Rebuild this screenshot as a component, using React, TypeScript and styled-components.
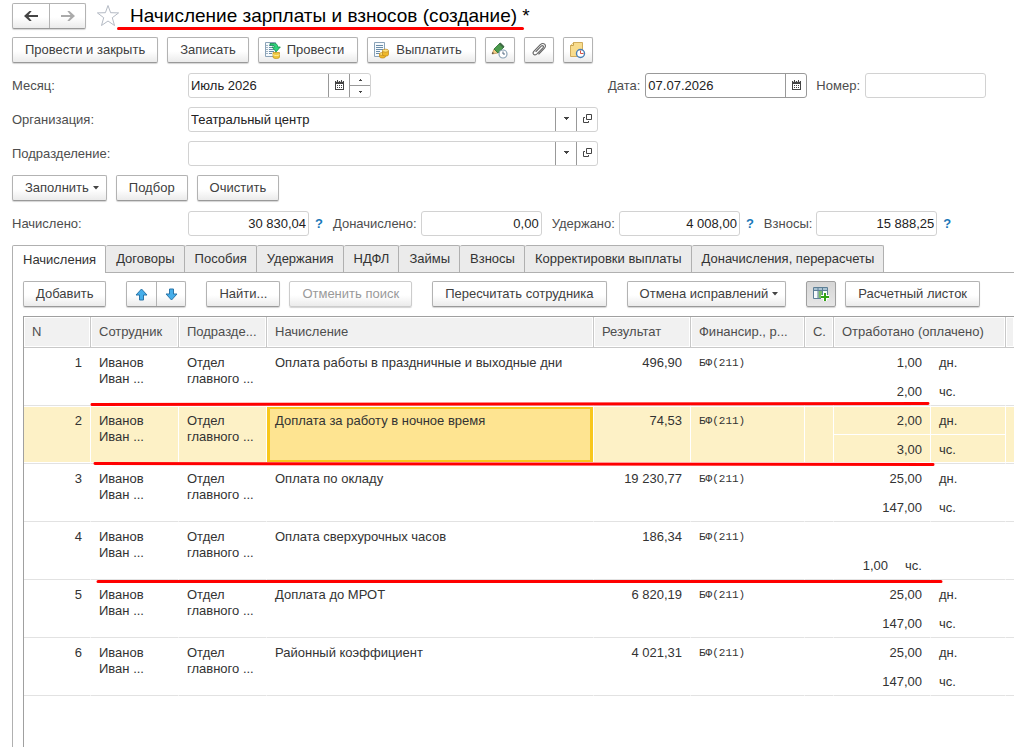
import React from "react";
import styled, { createGlobalStyle, css } from "styled-components";

const GlobalStyle = createGlobalStyle`
  *, *::before, *::after { box-sizing: border-box; }
  body {
    margin: 0;
    background: #fff;
    color: #333;
    font: 13px/16px "Liberation Sans", Arial, sans-serif;
  }
  button, input { font: inherit; color: inherit; margin: 0; }
  svg { display: block; flex: none; }
`;

/* ---------- page ---------- */

const Page = styled.main`
  display: flex;
  flex-direction: column;
  gap: 9px;
  min-height: 100vh;
  padding: 3px 0 0 12px;
  overflow: hidden;
`;

const Header = styled.header`
  display: flex;
  align-items: center;
  height: 25px;
`;

const FavoriteButton = styled.button`
  margin: 0 0 0 10px;
  padding: 0;
  border: 0;
  background: none;
`;

const Title = styled.h1`
  position: relative;
  margin: 0 0 0 10px;
  color: #000;
  font-size: 19px;
  font-weight: 400;
  line-height: 24px;
  white-space: nowrap;
`;

const TitleMark = styled.svg`
  position: absolute;
  left: -13px;
  top: 22px;
`;

/* ---------- buttons ---------- */

const buttonFace = css`
  border: 1px solid #b3b3b3;
  border-bottom-color: #999;
  background: linear-gradient(#fff 55%, #ebebeb);
  box-shadow: 0 1px 1px #d4d4d4;
`;

const Button = styled.button<{ $pressed?: boolean; $icon?: boolean }>`
  ${buttonFace}
  display: flex;
  align-items: center;
  justify-content: center;
  gap: 6px;
  height: 26px;
  padding: 0 12px;
  border-radius: 2px;
  color: #404040;
  white-space: nowrap;
  ${(p) => p.$icon && css`width: 30px; padding: 0;`}
  ${(p) => p.$pressed && css`
    border-color: #a0a0a0;
    background: linear-gradient(#d6d6d6, #e6e6e6);
  `}
  &:disabled { color: #999; border-color: #ccc; }
`;

const IconTextButton = styled(Button)`
  padding: 0 13px 0 5px;
`;

const MenuButton = styled(Button)`
  gap: 4px;
  padding-right: 6px;
`;

const ButtonPair = styled.div<{ $cell: number }>`
  ${buttonFace}
  display: flex;
  height: 26px;
  border-radius: 2px;
  button {
    display: flex;
    align-items: center;
    justify-content: center;
    width: ${(p) => p.$cell}px;
    padding: 0;
    border: 0;
    background: none;
  }
  button + button { border-left: 1px solid #b3b3b3; }
`;

const Toolbar = styled.div`
  display: flex;
  gap: 9px;
  height: 27px;
`;

const ListToolbar = styled(Toolbar)`
  gap: 20px;
`;

const ToolGroup = styled.div`
  display: flex;
  gap: 9px;
`;

/* ---------- form ---------- */

const FormRow = styled.div`
  display: grid;
  grid-template-columns: 176px 1fr 388px;
  align-items: center;
  padding-right: 28px;
`;

const Label = styled.label`
  color: #4d4d4d;
  white-space: nowrap;
`;

const Field = styled.div<{ $width?: number; $active?: boolean }>`
  display: flex;
  width: ${(p) => (p.$width ? p.$width + "px" : "100%")};
  height: 25px;
  border: 1px solid ${(p) => (p.$active ? "#999" : "#d2d2d2")};
  border-radius: 3px;
  background: #fff;
`;

const Input = styled.input`
  flex: 1;
  min-width: 0;
  padding: 0 2px;
  border: 0;
  outline: 0;
  background: none;
  color: #222;
`;

const NumberInput = styled(Input)`
  text-align: right;
`;

const FieldButton = styled.button`
  display: flex;
  align-items: center;
  justify-content: center;
  width: 21px;
  padding: 0 0 2px;
  border: 0;
  border-left: 1px solid #999;
  background: none;
`;

const Spinner = styled.div`
  display: flex;
  flex-direction: column;
  width: 21px;
  border-left: 1px solid #999;
  button {
    display: flex;
    flex: 1;
    align-items: center;
    justify-content: center;
    padding: 0;
    border: 0;
    background: none;
  }
  button + button { border-top: 1px solid #999; }
`;

const DateGroup = styled.div`
  display: flex;
  align-items: center;
  justify-content: flex-end;
  gap: 5px;
`;

const NumberLabel = styled(Label)`
  margin-left: 4px;
`;

const Totals = styled.div`
  display: flex;
  align-items: center;
`;

const FirstTotalLabel = styled(Label)`
  width: 176px;
`;

const TotalLabel = styled(Label)`
  margin: 0 4px 0 10px;
`;

const Help = styled.a`
  margin-left: 6px;
  color: #1a78b8;
  font-weight: 700;
  text-decoration: none;
`;

/* ---------- tabs ---------- */

const TabArea = styled.section`
  display: flex;
  flex: 1;
  flex-direction: column;
`;

const Tabs = styled.div`
  display: flex;
  height: 27px;
`;

const Tab = styled.button<{ $active?: boolean }>`
  height: ${(p) => (p.$active ? 28 : 27)}px;
  padding: 0 9px 0 10px;
  border: 1px solid #b0b0b0;
  border-bottom: 0;
  border-left-width: ${(p) => (p.$active ? 1 : 0)}px;
  border-radius: 2px 2px 0 0;
  background: ${(p) => (p.$active ? "#fff" : "#ebebeb")};
  white-space: nowrap;
  z-index: ${(p) => (p.$active ? 1 : 0)};
`;

const Panel = styled.div`
  display: flex;
  flex: 1;
  flex-direction: column;
  gap: 8px;
  padding: 8px 0 0 10px;
  border-top: 1px solid #b0b0b0;
  border-left: 1px solid #b0b0b0;
`;

/* ---------- list ---------- */

const List = styled.div`
  position: relative;
  flex: 1;
  border-top: 1px solid #a0a0a0;
  border-left: 1px solid #a0a0a0;
`;

const Table = styled.table`
  width: 100%;
  table-layout: fixed;
  border-collapse: separate;
  border-spacing: 0;
`;

const Th = styled.th`
  height: 31px;
  padding: 0 8px;
  border-right: 1px solid #c8c8c8;
  border-bottom: 1px solid #c8c8c8;
  background: #f1f1f1;
  box-shadow: inset 0 0 0 1px #fff;
  color: #4d4d4d;
  font-weight: 400;
  text-align: left;
  overflow: hidden;
  white-space: nowrap;
  &:last-child { border-right: 0; }
`;

const Td = styled.td<{
  $right?: boolean;
  $selected?: boolean;
  $current?: boolean;
  $edge?: boolean;
  $half?: "top" | "bottom";
}>`
  height: ${(p) => (p.$half ? 29 : 58)}px;
  padding: 7px 8px 0;
  border-right: ${(p) => (p.$edge ? "0" : "1px solid #fff")};
  border-bottom: ${(p) => (p.$half === "top" ? "0" : "1px solid #e2e2e2")};
  text-align: ${(p) => (p.$right ? "right" : "left")};
  vertical-align: top;
  white-space: nowrap;
  ${(p) => p.$selected && css`
    background: #fdf1c6;
    box-shadow: inset 0 ${p.$half === "bottom" ? 0 : 1}px #fff, inset 0 -1px #fff;
  `}
  ${(p) => p.$current && css`
    background: #fee491;
    box-shadow: inset 0 1px #fff, inset 0 -1px #fff, inset 0 0 0 3px #f8c71c;
  `}
`;

const Code = styled.span`
  font-family: "Liberation Mono", "Courier New", monospace;
  font-size: 11px;
  vertical-align: 1px;
`;

const QtyWithUnit = styled.span`
  display: inline-flex;
  gap: 17px;
`;

const RowMarks = styled.svg`
  position: absolute;
  inset: 0;
  pointer-events: none;
`;

/* ---------- icons ---------- */

const ArrowIcon = ({ back }: { back?: boolean }) => (
  <svg width="16" height="12" viewBox="0 0 16 12">
    {back ? (
      <path d="M1 6l5.500-5h2.200L5.500 5H15v2H5.500l3.200 4H6.500z" fill="#444" />
    ) : (
      <path d="M15 6L9.500 1H7.300l3.200 4H1v2h9.500L7.300 11h2.200z" fill="#aaa" />
    )}
  </svg>
);

const StarIcon = () => (
  <svg width="24" height="23" viewBox="0 0 24 23" fill="#fff" stroke="#b4bac4" strokeWidth="1">
    <path d="m12 1.500 2.600 7.200 8 .2-6.300 4.800 2.200 7.800L12 17l-6.500 4.500 2.200-7.800L1.400 8.900l8-.2z" />
  </svg>
);

const CaretIcon = () => (
  <svg width="7" height="4" viewBox="0 0 7 4" fill="#444"><path d="M0 0h6L3 3.500z" /></svg>
);

const SmallCaret = ({ up }: { up?: boolean }) => (
  <svg width="3" height="2" viewBox="0 0 3 2" fill="#444">
    <path d={up ? "M0 2V1h1V0h1v1h1v1z" : "M0 0h3v1H2v1H1V1H0z"} />
  </svg>
);

const DropIcon = () => (
  <svg width="5" height="3" viewBox="0 0 5 3" fill="#444"><path d="M0 0h5v1H4v1H3v1H2V2H1V1H0z" /></svg>
);

const CalendarIcon = () => (
  <svg width="9" height="10" viewBox="0 0 9 10">
    <path d="M0 1h9v9H0z" fill="#444" />
    <path d="M1 4h7v5H1z" fill="#fff" />
    <path d="M2 0h1v2H2zM6 0h1v2H6z" fill="#444" />
    <path d="M1 1h1v1H1zM3 1h1v1H3zM5 1h1v1H5zM7 1h1v1H7z" fill="#ddd" />
    <path d="M2 5h1v1H2zM4 5h1v1H4zM6 5h1v1H6zM2 7h1v1H2zM4 7h1v1H4zM6 7h1v1H6z" fill="#444" />
  </svg>
);

const OpenIcon = () => (
  <svg width="9" height="9" viewBox="0 0 9 9" fill="none" stroke="#444">
    <path d="M3.500.5h5v5h-5zM2 3.500H.5v5h5V7" />
  </svg>
);

const PostIcon = () => (
  <svg width="17" height="17" viewBox="0 0 17 17">
    <path d="M1.500.500h10v14h-10z" fill="#f6fafd" stroke="#8ba3b8" />
    <path d="M5 3.500h5M5 5.500h5M5 7.500h5M5 9.500h5M5 11.500h3" stroke="#6a8ca8" />
    <path d="M2.500 3.500h1M2.500 5.500h1M2.500 7.500h1M2.500 9.500h1M2.500 11.500h1" stroke="#4a6c88" />
    <path d="M9 10.500h6.500v4.500c0 2-6.500 2-6.500 0z" fill="#f0c63a" stroke="#c09018" strokeWidth=".7" />
    <path d="M9 12.700c1 1 5.500 1 6.500 0" fill="none" stroke="#fff0a0" />
    <path d="M6 1.500h4.500c2 0 3.200 1.200 3.200 3.500h2.600L12.200 9.800 8 5h2.600c0-1.500-.6-1.800-4.600-1.800z" fill="#2ed47c" stroke="#128a48" strokeWidth=".8" />
  </svg>
);

const PayIcon = () => (
  <svg width="17" height="17" viewBox="0 0 17 17">
    <path d="M1.500.500h10v14h-10z" fill="#f6fafd" stroke="#8ba3b8" />
    <path d="M3 3.500h7M3 5.500h7M3 7.500h7M3 9.500h4M3 11.500h4" stroke="#6a8ca8" />
    <path d="M6.500 12v2.500c0 2 6 2 6 0V12z" fill="#efb92a" stroke="#bd8414" strokeWidth=".7" />
    <ellipse cx="9.500" cy="12" rx="3" ry="1.500" fill="#ffe680" stroke="#bd8414" strokeWidth=".7" />
    <path d="M9.500 9v4c2 1.500 6 1.500 6-.5V9z" fill="#efb92a" stroke="#bd8414" strokeWidth=".7" />
    <ellipse cx="12.500" cy="8.700" rx="3" ry="1.500" fill="#ffe680" stroke="#bd8414" strokeWidth=".7" />
  </svg>
);

const PencilIcon = () => (
  <svg width="17" height="17" viewBox="0 0 17 17">
    <path d="m1 12 2-5 4 4z" fill="#f4cd83" stroke="#a87b3b" strokeWidth=".6" />
    <path d="m3 7 6-6 4 4-6 6z" fill="#4c9b4d" stroke="#286d32" strokeWidth=".8" />
    <path d="m8 2 1.500-1.500 4 4L12 6z" fill="#3f6b45" />
    <path d="m1 12 .7-2 1.300 1.300z" fill="#333" />
    <circle cx="12" cy="12" r="4" fill="#fff" stroke="#8aa2b5" strokeWidth="1.200" />
    <path d="M12 9.500V12h2" fill="none" stroke="#536b82" />
  </svg>
);

const ClipIcon = () => (
  <svg width="16" height="16" viewBox="0 0 16 16" fill="none" stroke="#666" strokeWidth="1.100" strokeLinecap="round">
    <path d="m5 9.500 5.200-5.300c1.500-1.300 3 .2 1.700 1.600l-6.200 6.300c-2.400 2-4.800-.4-2.900-2.700l6.500-6.700c3.400-3 6.800.5 4 3.700l-5.500 5.600" />
  </svg>
);

const NoteClockIcon = () => (
  <svg width="17" height="17" viewBox="0 0 17 17">
    <path d="M1.500 3.500v11h12v-14h-9z" fill="#f8dc8d" stroke="#d0ac5c" />
    <path d="M1.500 3.500h3v-3" fill="#fff0bc" stroke="#c6a04e" />
    <circle cx="11.500" cy="11.500" r="4" fill="#fff" stroke="#4a7fb5" strokeWidth="1.400" />
    <path d="M11.500 11.500V8.500M11.500 11.500h3" stroke="#d45045" />
  </svg>
);

const MoveIcon = ({ down }: { down?: boolean }) => (
  <svg width="13" height="13" viewBox="0 0 13 13" fill="#45aeea" stroke="#2a75a8" strokeLinejoin="round">
    <path d={down ? "M4.500 1h4v5h3.500L6.500 12 1 6h3.500z" : "M4.500 12h4V7h3.500L6.500 1 1 7h3.500z"} />
  </svg>
);

const ColumnsIcon = () => (
  <svg width="17" height="15" viewBox="0 0 17 15">
    <path d="M.5.5h14v11H.5z" fill="#f7fafc" stroke="#5d7f96" />
    <path d="M1 1h13v2H1z" fill="#a9c2d2" />
    <path d="M5.500 3h4v8h-4z" fill="#78bd66" />
    <path d="M1 3.500h13M5 1v10M9.500 1v10" stroke="#5d7f96" />
    <path d="M12 6v8M8 10h8" stroke="#fff" strokeWidth="4" />
    <path d="M12 6v8M8 10h8" stroke="#32a317" strokeWidth="2" />
  </svg>
);

/* ---------- data ---------- */

type Entry = { name: string; sum: string; days?: string; hours: string };

const entries: Entry[] = [
  { name: "Оплата работы в праздничные и выходные дни", sum: "496,90", days: "1,00", hours: "2,00" },
  { name: "Доплата за работу в ночное время", sum: "74,53", days: "2,00", hours: "3,00" },
  { name: "Оплата по окладу", sum: "19 230,77", days: "25,00", hours: "147,00" },
  { name: "Оплата сверхурочных часов", sum: "186,34", hours: "1,00" },
  { name: "Доплата до МРОТ", sum: "6 820,19", days: "25,00", hours: "147,00" },
  { name: "Районный коэффициент", sum: "4 021,31", days: "25,00", hours: "147,00" },
];

const tabs = [
  "Начисления", "Договоры", "Пособия", "Удержания", "НДФЛ", "Займы", "Взносы",
  "Корректировки выплаты", "Доначисления, перерасчеты",
];

const SELECTED = 1;

const EntryRows = ({ entry, index }: { entry: Entry; index: number }) => {
  const selected = index === SELECTED;
  return (
    <>
      <tr>
        <Td rowSpan={2} $right $selected={selected}>{index + 1}</Td>
        <Td rowSpan={2} $selected={selected}>Иванов<br />Иван ...</Td>
        <Td rowSpan={2} $selected={selected}>Отдел<br />главного ...</Td>
        <Td rowSpan={2} $current={selected}>{entry.name}</Td>
        <Td rowSpan={2} $right $selected={selected}>{entry.sum}</Td>
        <Td rowSpan={2} $selected={selected}><Code>БФ(211)</Code></Td>
        <Td rowSpan={2} $selected={selected} />
        <Td $half="top" $right $selected={selected}>{entry.days}</Td>
        <Td $half="top" $selected={selected}>{entry.days && "дн."}</Td>
        <Td rowSpan={2} $edge $selected={selected} />
      </tr>
      <tr>
        <Td $half="bottom" $right $selected={selected}>
          {entry.days ? entry.hours : <QtyWithUnit><span>{entry.hours}</span><span>чс.</span></QtyWithUnit>}
        </Td>
        <Td $half="bottom" $selected={selected}>{entry.days && "чс."}</Td>
      </tr>
    </>
  );
};

export default function App() {
  return (
    <>
      <GlobalStyle />
      <Page>
        <Header>
          <ButtonPair $cell={36}>
            <button aria-label="Назад"><ArrowIcon back /></button>
            <button aria-label="Вперед"><ArrowIcon /></button>
          </ButtonPair>
          <FavoriteButton aria-label="Избранное"><StarIcon /></FavoriteButton>
          <Title>
            Начисление зарплаты и взносов (создание) *
            <TitleMark width="408" height="5">
              <path d="M1.500 2.500h404" stroke="#f00" strokeWidth="3" strokeLinecap="round" />
            </TitleMark>
          </Title>
        </Header>

        <Toolbar>
          <Button>Провести и закрыть</Button>
          <Button>Записать</Button>
          <IconTextButton><PostIcon />Провести</IconTextButton>
          <IconTextButton><PayIcon />Выплатить</IconTextButton>
          <Button $icon aria-label="Исправить"><PencilIcon /></Button>
          <Button $icon aria-label="Файлы"><ClipIcon /></Button>
          <Button $icon aria-label="Напоминание"><NoteClockIcon /></Button>
        </Toolbar>

        <FormRow>
          <Label htmlFor="month">Месяц:</Label>
          <Field $width={183}>
            <Input id="month" defaultValue="Июль 2026" />
            <FieldButton aria-label="Выбрать месяц"><CalendarIcon /></FieldButton>
            <Spinner>
              <button aria-label="Следующий"><SmallCaret up /></button>
              <button aria-label="Предыдущий"><SmallCaret /></button>
            </Spinner>
          </Field>
          <DateGroup>
            <Label htmlFor="date">Дата:</Label>
            <Field $width={162} $active>
              <Input id="date" defaultValue="07.07.2026" />
              <FieldButton aria-label="Выбрать дату"><CalendarIcon /></FieldButton>
            </Field>
            <NumberLabel htmlFor="number">Номер:</NumberLabel>
            <Field $width={121}><Input id="number" /></Field>
          </DateGroup>
        </FormRow>

        <FormRow>
          <Label htmlFor="org">Организация:</Label>
          <Field>
            <Input id="org" defaultValue="Театральный центр" />
            <FieldButton aria-label="Список организаций"><DropIcon /></FieldButton>
            <FieldButton aria-label="Открыть организацию"><OpenIcon /></FieldButton>
          </Field>
        </FormRow>

        <FormRow>
          <Label htmlFor="dept">Подразделение:</Label>
          <Field>
            <Input id="dept" />
            <FieldButton aria-label="Список подразделений"><DropIcon /></FieldButton>
            <FieldButton aria-label="Открыть подразделение"><OpenIcon /></FieldButton>
          </Field>
        </FormRow>

        <Toolbar>
          <MenuButton>Заполнить<CaretIcon /></MenuButton>
          <Button>Подбор</Button>
          <Button>Очистить</Button>
        </Toolbar>

        <Totals>
          <FirstTotalLabel htmlFor="accrued">Начислено:</FirstTotalLabel>
          <Field $width={121}><NumberInput id="accrued" defaultValue="30 830,04" /></Field>
          <Help href="#accrued">?</Help>
          <TotalLabel htmlFor="extra">Доначислено:</TotalLabel>
          <Field $width={121}><NumberInput id="extra" defaultValue="0,00" /></Field>
          <TotalLabel htmlFor="withheld">Удержано:</TotalLabel>
          <Field $width={121}><NumberInput id="withheld" defaultValue="4 008,00" /></Field>
          <Help href="#withheld">?</Help>
          <TotalLabel htmlFor="contrib">Взносы:</TotalLabel>
          <Field $width={121}><NumberInput id="contrib" defaultValue="15 888,25" /></Field>
          <Help href="#contrib">?</Help>
        </Totals>

        <TabArea>
          <Tabs role="tablist">
            {tabs.map((tab, i) => (
              <Tab key={tab} role="tab" aria-selected={i === 0} $active={i === 0}>{tab}</Tab>
            ))}
          </Tabs>
          <Panel>
            <ListToolbar>
              <Button>Добавить</Button>
              <ButtonPair $cell={29}>
                <button aria-label="Вверх"><MoveIcon /></button>
                <button aria-label="Вниз"><MoveIcon down /></button>
              </ButtonPair>
              <ToolGroup>
                <Button>Найти...</Button>
                <Button disabled>Отменить поиск</Button>
              </ToolGroup>
              <Button>Пересчитать сотрудника</Button>
              <MenuButton>Отмена исправлений<CaretIcon /></MenuButton>
              <ToolGroup>
                <Button $icon $pressed aria-label="Колонки"><ColumnsIcon /></Button>
                <Button>Расчетный листок</Button>
              </ToolGroup>
            </ListToolbar>

            <List>
              <Table>
                <colgroup>
                  <col width="67" /><col width="88" /><col width="88" /><col />
                  <col width="97" /><col width="114" /><col width="29" />
                  <col width="97" /><col width="75" /><col width="8" />
                </colgroup>
                <thead>
                  <tr>
                    <Th>N</Th>
                    <Th>Сотрудник</Th>
                    <Th>Подразде...</Th>
                    <Th>Начисление</Th>
                    <Th>Результат</Th>
                    <Th>Финансир., р...</Th>
                    <Th>С.</Th>
                    <Th colSpan={2}>Отработано (оплачено)</Th>
                    <Th />
                  </tr>
                </thead>
                <tbody>
                  {entries.map((entry, i) => <EntryRows key={entry.name} entry={entry} index={i} />)}
                </tbody>
              </Table>
              <RowMarks width="100%" height="270" stroke="#f00" strokeWidth="3" strokeLinecap="round">
                <path d="M68 87.500 904 86.500M71 146.500 909 147.500M74 264.500H917" />
              </RowMarks>
            </List>
          </Panel>
        </TabArea>
      </Page>
    </>
  );
}
